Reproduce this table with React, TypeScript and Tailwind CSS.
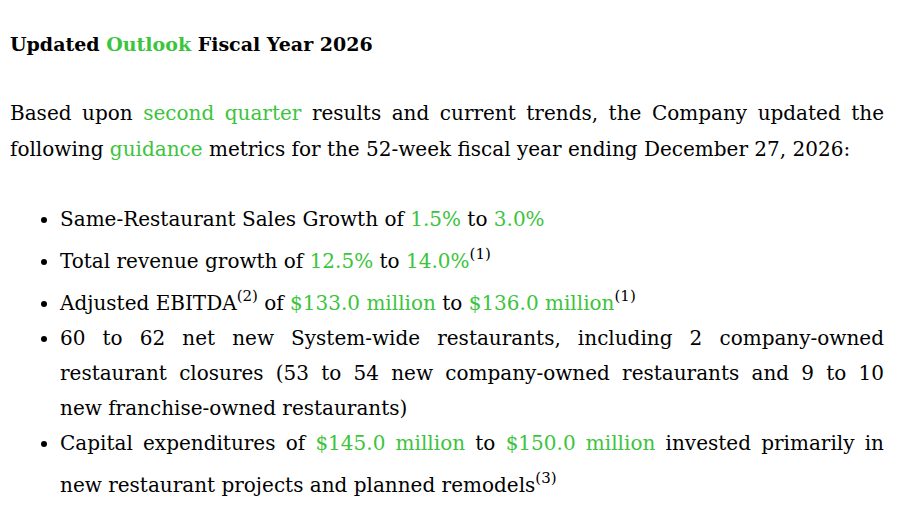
import React from "react";

const G = ({ children }: { children: React.ReactNode }) => (
  <span className="text-[#3cc43c]">{children}</span>
);

const Sup = ({ children }: { children: React.ReactNode }) => (
  <sup className="text-[15px] leading-[35px] align-[9px] static">{children}</sup>
);

export default function App() {
  return (
    <div className="w-[910px] h-[511px] bg-white overflow-hidden text-black font-['DejaVu_Serif',serif] pl-[10px] pr-[26px] pt-[26px]">
      <h2 className="text-[19px] font-bold leading-[36px]">
        Updated <G>Outlook</G> Fiscal Year 2026
      </h2>
      <p className="mt-[33px] text-[20px] leading-[36px] text-justify">
        Based upon <G>second quarter</G> results and current trends, the Company updated the following{" "}
        <G>guidance</G> metrics for the 52-week fiscal year ending December 27, 2026:
      </p>
      <ul className="mt-[35px] list-disc pl-[50px] text-[20px] leading-[35px] text-justify">
        <li>
          Same-Restaurant Sales Growth of <G>1.5%</G> to <G>3.0%</G>
        </li>
        <li>
          Total revenue growth of <G>12.5%</G> to <G>14.0%</G>
          <Sup>(1)</Sup>
        </li>
        <li>
          Adjusted EBITDA<Sup>(2)</Sup> of <G>$133.0 million</G> to <G>$136.0 million</G>
          <Sup>(1)</Sup>
        </li>
        <li>
          60 to 62 net new System-wide restaurants, including 2 company-owned restaurant closures (53 to 54 new
          company-owned restaurants and 9 to 10{" "}
          <span className="whitespace-nowrap">new franchise-owned</span> restaurants)
        </li>
        <li>
          Capital expenditures of <G>$145.0 million</G> to <G>$150.0 million</G> invested primarily in new
          restaurant projects and planned remodels<Sup>(3)</Sup>
        </li>
      </ul>
    </div>
  );
}
